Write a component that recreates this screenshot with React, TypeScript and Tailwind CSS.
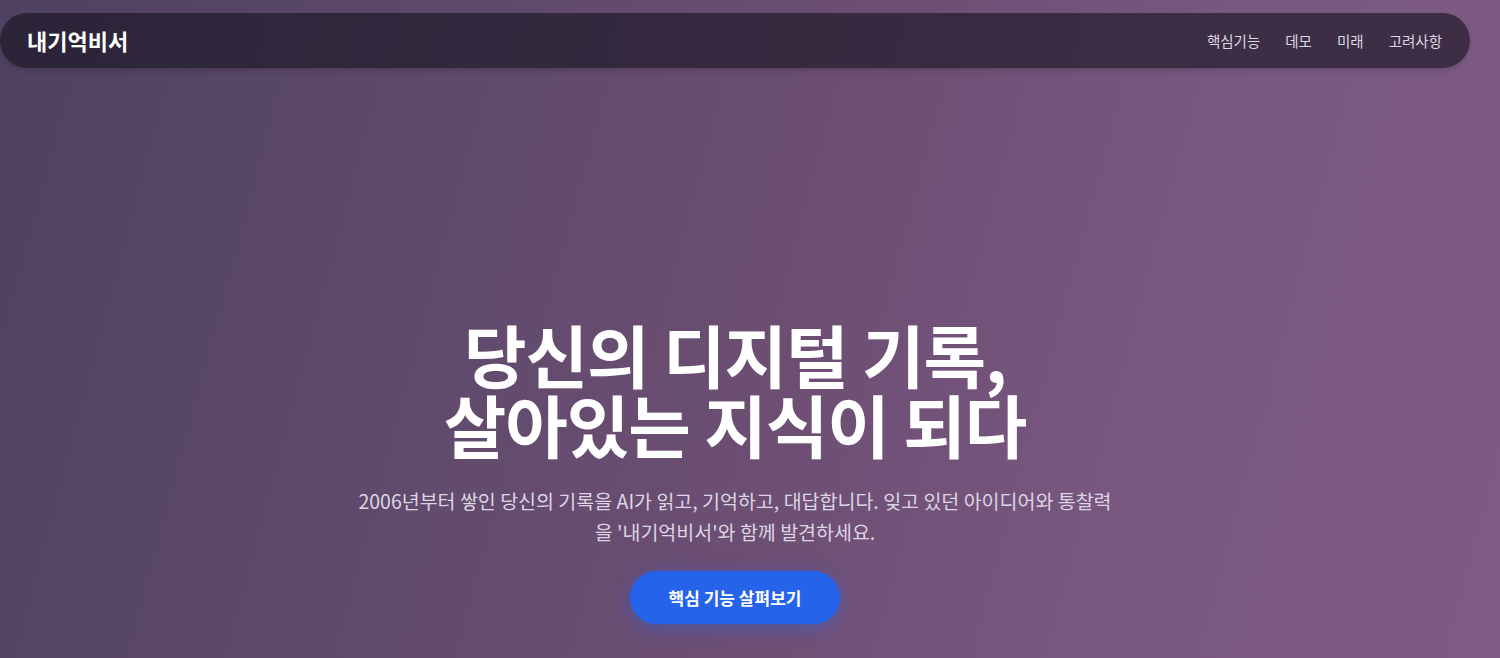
const navLinks = ["핵심기능", "데모", "미래", "고려사항"];

export default function App() {
  return (
    <div
      className="min-h-screen w-full overflow-hidden bg-[linear-gradient(105deg,#4f4160_0%,#5f4a6c_30%,#6e4f74_55%,#785780_75%,#7e5b86_100%)] text-white"
      style={{ fontFamily: '"Noto Sans CJK KR", "Noto Sans", sans-serif' }}
    >
      <div className="pr-[30px]">
        <header className="pt-[13px]">
          <nav className="flex h-[55px] items-center justify-between rounded-full bg-[#14121e]/60 pl-[27px] pr-7 shadow-md">
            <span className="text-[22px] font-bold text-white">내기억비서</span>
            <ul className="flex items-center gap-[25px] text-[14.5px] text-[#ddd6e3]">
              {navLinks.map((l) => (
                <li key={l}>
                  <a href="#" className="hover:text-white">
                    {l}
                  </a>
                </li>
              ))}
            </ul>
          </nav>
        </header>

        <section className="flex flex-col items-center px-6 pt-[251px] text-center">
          <h1 className="text-[68px] font-bold leading-[70px] tracking-[-0.015em] text-white">
            당신의 디지털 기록,
            <br />
            살아있는 지식이 되다
          </h1>
          <p className="mt-[26px] max-w-[756px] text-[19.5px] leading-[31px] text-[#ddd5e2]">
            2006년부터 쌓인 당신의 기록을 AI가 읽고, 기억하고, 대답합니다. 잊고 있던 아이디어와 통찰력을 '내기억비서'와 함께 발견하세요.
          </p>
          <a
            href="#"
            className="mt-[24px] flex h-[53px] items-center rounded-full bg-[#2563eb] px-[39px] text-[17px] font-bold text-white shadow-[0_4px_18px_rgba(37,99,235,0.45)]"
          >
            핵심 기능 살펴보기
          </a>
        </section>
      </div>
    </div>
  );
}
